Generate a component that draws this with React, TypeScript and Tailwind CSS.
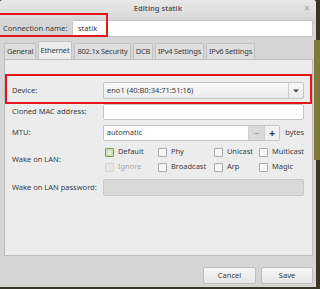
import React from 'react';

const font = "font-['Noto_Sans','DejaVu_Sans',sans-serif]";

function Entry({ value, className = '', disabled = false }: { value?: string; className?: string; disabled?: boolean }) {
  return (
    <div
      className={`flex items-center rounded-[2px] border px-[5px] ${
        disabled ? 'border-[#c8c8c8] bg-[#d9d9d9]' : 'border-[#c4c4c4] bg-white'
      } ${className}`}
    >
      <span className="text-[7.5px] text-[#3c3c3c]">{value}</span>
    </div>
  );
}

function Check({ label, checked = false, disabled = false }: { label: string; checked?: boolean; disabled?: boolean }) {
  return (
    <div className="flex h-[12px] items-center gap-[4px]">
      <span
        className={`flex h-[9px] w-[9px] items-center justify-center rounded-[1px] border ${
          checked ? 'border-[#7f9e58] bg-[#c9dcb0]' : disabled ? 'border-[#d4d4d4] bg-[#e6e6e6]' : 'border-[#a9a9a9] bg-[#f7f7f7]'
        }`}
      >
        {checked && (
          <svg width="5" height="5" viewBox="0 0 5 5">
            <path d="M0.8 0.8 L4.2 4.2 M4.2 0.8 L0.8 4.2" stroke="#f4f8ee" strokeWidth="1.2" />
          </svg>
        )}
      </span>
      <span className={`text-[7.5px] ${disabled ? 'text-[#a8a8a8]' : 'text-[#3c3c3c]'}`}>{label}</span>
    </div>
  );
}

const tabs = [
  { name: 'General', w: 'w-[32px]' },
  { name: 'Ethernet', w: 'w-[34px]' },
  { name: '802.1x Security', w: 'w-[57px]' },
  { name: 'DCB', w: 'w-[20px]' },
  { name: 'IPv4 Settings', w: 'w-[49px]' },
  { name: 'IPv6 Settings', w: 'w-[49px]' },
];

export default function App() {
  return (
    <div className={`relative h-[289px] w-[320px] overflow-hidden bg-[#3a3528] ${font}`}>
      <div className="absolute right-0 top-[40px] h-[120px] w-[6px] bg-[#7d7a3c]" />
      <div className="flex h-[287px] w-[316px] flex-col rounded-t-[3px] bg-[#d5d5d5]">
        {/* title bar */}
        <div className="relative flex h-[18px] items-center justify-center rounded-t-[3px] bg-gradient-to-b from-[#e8e8e8] to-[#dadada]">
          <span className="text-[7.5px] font-semibold text-[#5a5a5a]">Editing statik</span>
          <span className="absolute right-[6px] top-[3px] text-[10px] leading-none text-[#9a9a9a]">×</span>
        </div>

        {/* connection name */}
        <div className="mt-[2px] flex h-[17px] items-center pl-[3px] pr-[3px]">
          <span className="w-[69px] text-[7.5px] text-[#3c3c3c]">Connection name:</span>
          <Entry value="statik" className="h-[17px] flex-1" />
        </div>

        {/* tabs */}
        <div className="mt-[5px] flex h-[17px] items-end gap-[2px] pl-[4px]">
          {tabs.map((t) => (
            <div
              key={t.name}
              className={`flex items-center justify-center whitespace-nowrap rounded-t-[2px] border border-b-0 border-[#c2c2c2] text-[7.5px] tracking-[-0.2px] text-[#3c3c3c] ${t.w} ${
                t.name === 'Ethernet' ? 'h-[18px] bg-[#ececec]' : 'h-[16px] bg-[#dedede]'
              }`}
            >
              {t.name}
            </div>
          ))}
        </div>

        {/* panel */}
        <div className="ml-[4px] mr-[3px] flex h-[197px] flex-col border border-[#bdbdbd] bg-[#ececec] pl-[7px] pr-[8px] pt-[22px]">
          <div className="flex h-[17px] items-center">
            <span className="w-[91px] text-[7.5px] text-[#3c3c3c]">Device:</span>
            <div className="flex h-[17px] flex-1 items-center rounded-[2px] border border-[#c4c4c4] bg-gradient-to-b from-[#f8f8f8] to-[#ececec]">
              <span className="flex-1 pl-[3px] text-[7.5px] text-[#3c3c3c]">eno1 (40:B0:34:71:51:16)</span>
              <span className="flex h-full w-[15px] items-center justify-center border-l border-[#cfcfcf]">
                <svg width="6" height="4" viewBox="0 0 6 4">
                  <path d="M0 0.5 L6 0.5 L3 3.5 Z" fill="#444" />
                </svg>
              </span>
            </div>
          </div>

          <div className="mt-[5px] flex h-[16px] items-center">
            <span className="w-[91px] text-[7.5px] text-[#3c3c3c]">Cloned MAC address:</span>
            <Entry className="h-[16px] flex-1" />
          </div>

          <div className="mt-[5px] flex h-[16px] items-center">
            <span className="w-[91px] text-[7.5px] text-[#3c3c3c]">MTU:</span>
            <div className="flex h-[16px] w-[178px] rounded-[2px] border border-[#c4c4c4] bg-white">
              <span className="flex flex-1 items-center pl-[3px] text-[7.5px] text-[#3c3c3c]">automatic</span>
              <span className="flex w-[16px] items-center justify-center border-l border-[#cfcfcf] bg-[#d9d9d9] text-[10px] leading-none text-[#9b9b9b]">−</span>
              <span className="flex w-[15px] items-center justify-center border-l border-[#cfcfcf] bg-[#f0f0f0] text-[10px] font-bold leading-none text-[#333]">+</span>
            </div>
            <span className="ml-[5px] text-[7.5px] text-[#3c3c3c]">bytes</span>
          </div>

          <div className="mt-[5px] flex items-center">
            <span className="w-[93px] text-[7.5px] text-[#3c3c3c]">Wake on LAN:</span>
            <div className="grid grid-cols-[53px_56px_45px_auto] gap-y-[3px]">
              <Check label="Default" checked />
              <Check label="Phy" />
              <Check label="Unicast" />
              <Check label="Multicast" />
              <Check label="Ignore" disabled />
              <Check label="Broadcast" />
              <Check label="Arp" />
              <Check label="Magic" />
            </div>
          </div>

          <div className="mt-[6px] flex h-[17px] items-center">
            <span className="w-[91px] text-[7.5px] text-[#3c3c3c]">Wake on LAN password:</span>
            <Entry disabled className="h-[17px] flex-1" />
          </div>
        </div>

        {/* buttons */}
        <div className="mt-[11px] flex justify-end gap-[5px] pr-[3px]">
          <button className="h-[17px] w-[53px] rounded-[2px] border border-[#bdbdbd] bg-gradient-to-b from-[#f6f6f6] to-[#e6e6e6] text-[7.5px] text-[#3c3c3c]">
            Cancel
          </button>
          <button className="h-[17px] w-[52px] rounded-[2px] border border-[#bdbdbd] bg-gradient-to-b from-[#f6f6f6] to-[#e6e6e6] text-[7.5px] text-[#3c3c3c]">
            Save
          </button>
        </div>
      </div>

      {/* red highlight boxes */}
      <div className="absolute left-[-4px] top-[13px] h-[24px] w-[112px] border-2 border-[#e8141c]" />
      <div className="absolute left-[5px] top-[74px] h-[30px] w-[307px] border-2 border-[#e8141c]" />
    </div>
  );
}
